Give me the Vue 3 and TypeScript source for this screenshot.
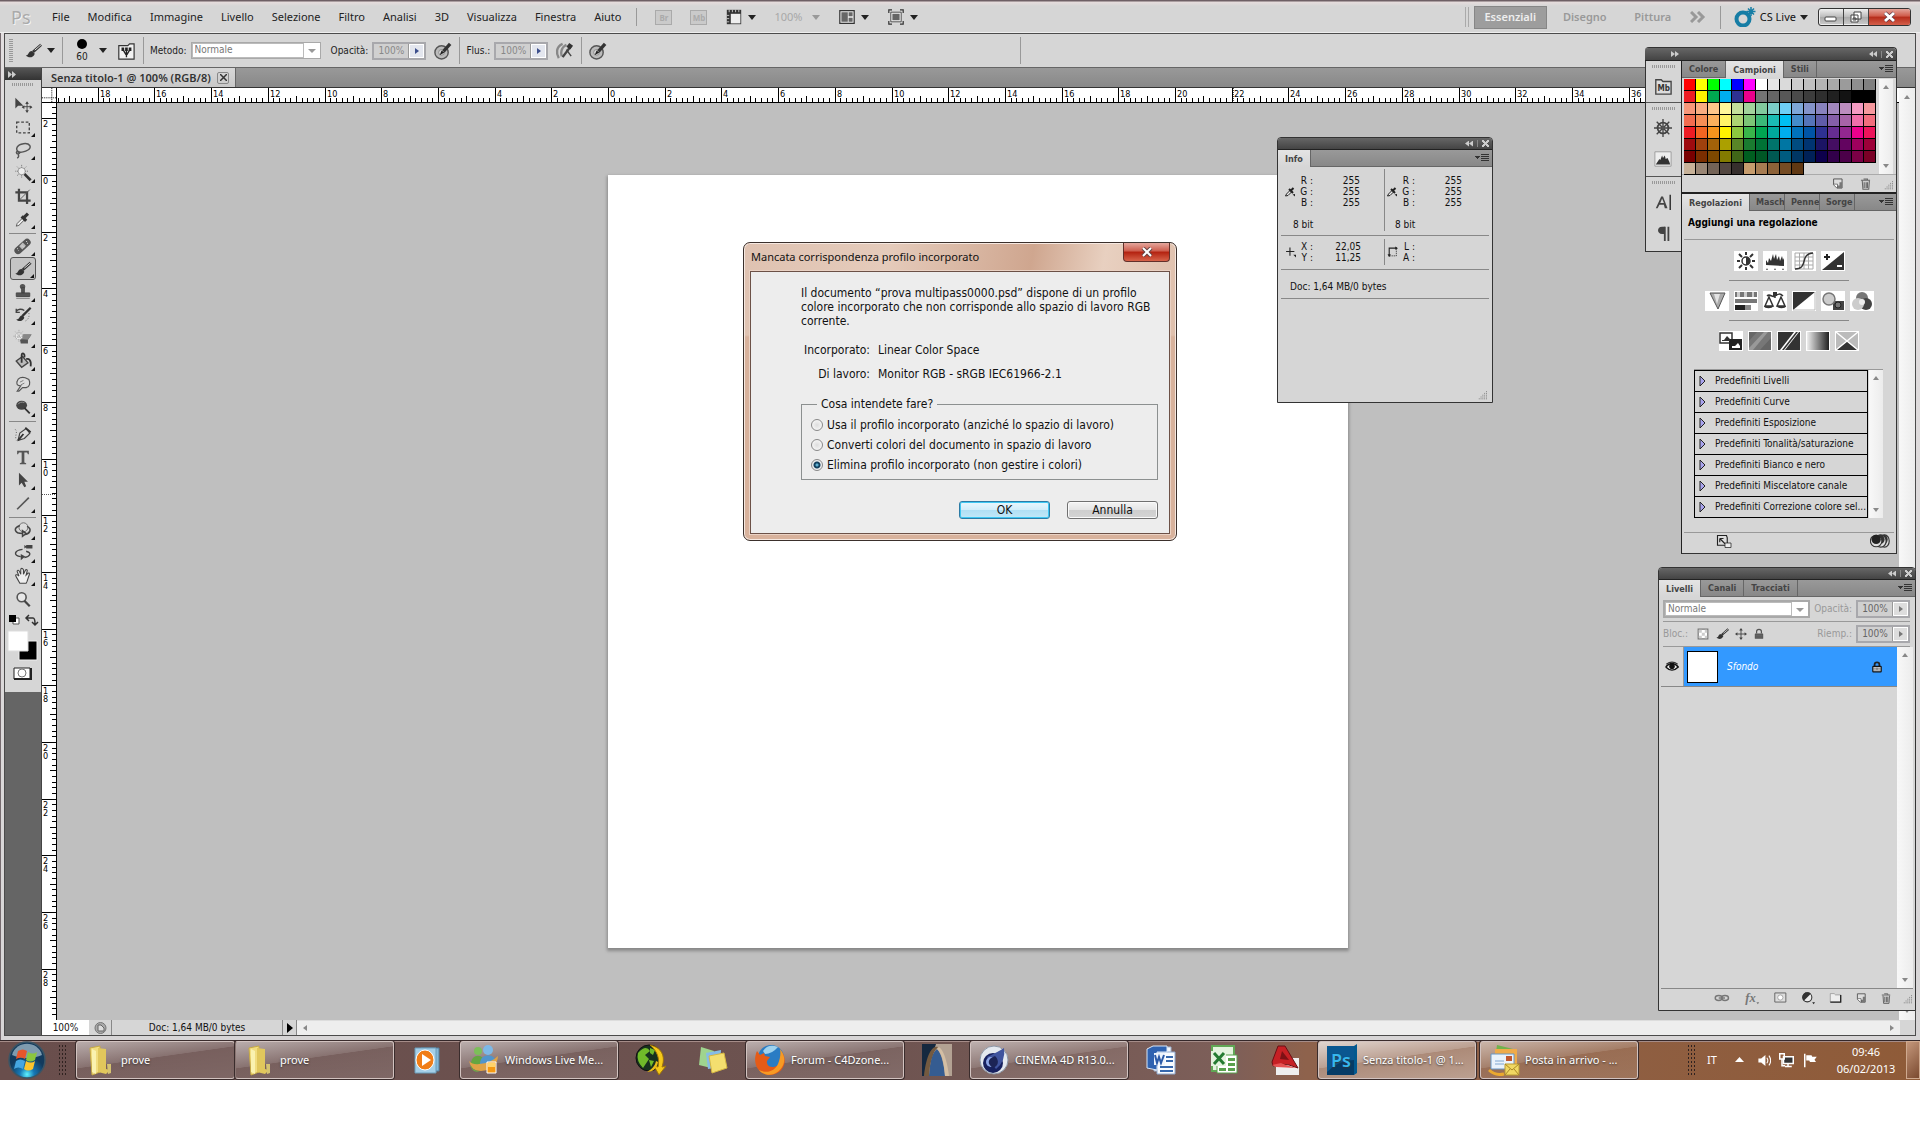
<script setup lang="ts">
import { h, ref } from 'vue'

const art: Record<string, string> = {
  move: '<path d="M2 3v12l3-3 2 0h4z" fill="#444"/><path d="M15 8v11M10 13h10" stroke="#444" stroke-width="1"/><path d="M15 7l2 3h-4zM15 20l2-3h-4zM9 13.500l3-2v4zM21 13.500l-3-2v4z" fill="#444"/>',
  marquee: '<rect x="3.500" y="4.500" width="14" height="12" fill="none" stroke="#444" stroke-width="1.500" stroke-dasharray="3 2"/>',
  lasso: '<path d="M6 13C1 9 4 4 11 3s10 4 5 7c-3 2-8 3-10 2m-2-1c-2 2 0 4 2 3s0-3-2-2m1 3c1 1 1 3-1 4" fill="none" stroke="#555" stroke-width="1.600"/>',
  wand: '<path d="M12 11l7 7" stroke="#333" stroke-width="3"/><circle cx="9" cy="8" r="4" fill="#eee" stroke="#999"/><path d="M9 1v3M9 12v3M2 8h3M13 8h3M4 3l2 2M14 3l-2 2M4 13l2-2" stroke="#666" stroke-dasharray="1 1"/>',
  crop: '<path d="M6 2v13h13M2 6h13v13" fill="none" stroke="#444" stroke-width="2.500"/><path d="M6 15L18 3" stroke="#555"/>',
  eyedrop: '<path d="M3 18l1-3 7-7 2 2-7 7z" fill="#eee" stroke="#555"/><path d="M9 7l5 5M12 8l4-4" stroke="#333" stroke-width="3.500"/>',
  sampler: '<path d="M1 19l2-4 8-8 3 3-8 8z" fill="#eee" stroke="#222" stroke-width="2"/><path d="M8 5l8 8M12 8l5-5" stroke="#222" stroke-width="4"/><path d="M15 16l5 4v-5z" fill="#222"/>',
  heal: '<path d="M5 15L15 6" stroke="#555" stroke-width="8" stroke-linecap="round"/><path d="M8 12l4-4" stroke="#bbb" stroke-width="5"/><path d="M5 15l.5 0M4 13h1M15 7h1M14 5h1M9 10h1M11 11h1" stroke="#eee"/>',
  brush: '<path d="M2 15c4 0 2-5 7-5l3 3c-2 5-7 5-10 2z" fill="#333"/><path d="M10 11l9-8" stroke="#333" stroke-width="3"/><path d="M12 9l7-6" stroke="#eee" stroke-width="1"/>',
  stamp: '<circle cx="10" cy="4" r="3" fill="#555"/><path d="M9 5h3v6H9zM3 11h15v4H3z" fill="#555" stroke="#444"/><path d="M3 17h15" stroke="#777"/>',
  history: '<path d="M3 15c4 0 3-4 7-5l2 3c-2 4-6 5-9 2z" fill="#333"/><path d="M10 11l9-9" stroke="#333" stroke-width="2.500"/><path d="M3 6c2-3 6-3 9-1M3 3v4h4" fill="none" stroke="#444" stroke-width="1.500"/><path d="M17 8c1 4-1 8-5 9" fill="none" stroke="#555" stroke-dasharray="1 2"/>',
  eraser: '<path d="M7 11l4-5h9l-4 6v4H8z" fill="#555"/><path d="M7 11l4-5h9l-4 6z" fill="#888"/><circle cx="6" cy="8" r="4" fill="#eee" stroke="#999" stroke-dasharray="1 1"/><path d="M6 1v14M0 8h12M2 3l8 9M10 3l-8 9" stroke="#999" stroke-dasharray="1 1"/>',
  bucket: '<path d="M3 10l7-5 6 7-7 5z" fill="#bbb" stroke="#444" stroke-width="1.500"/><path d="M9 12V4c0-4 4-3 3 2M14 8c3-1 6 1 5 8" fill="none" stroke="#333" stroke-width="2"/>',
  smudge: '<path d="M4 18l4-6c-4 0-5-2-4-5 1-4 5-5 9-4l4 2c2 4 1 8-3 9l-4 0-4 4z" fill="#ddd" stroke="#555" stroke-width="1.300"/><path d="M7 8l4-2M8 11l4-2" stroke="#777"/>',
  dodge: '<ellipse cx="9" cy="8" rx="6" ry="5" fill="#444"/><path d="M12 11l6 6" stroke="#333" stroke-width="2"/><path d="M5 7c1-2 4-3 7-2" stroke="#999" fill="none"/>',
  pen: '<path d="M5 17l2-8 7-5 4 5-6 6z" fill="#ddd" stroke="#444" stroke-width="1.300"/><path d="M13 3l6 5M5 17l6-7" stroke="#333" stroke-width="2"/><path d="M2 5c3 3-1 7 1 12" fill="none" stroke="#444" stroke-dasharray="1 2"/>',
  type: '<path d="M4 3h13v4h-1l-1-2h-3v11l2 1v1H7v-1l2-1V5H6L5 7H4z" fill="#555"/>',
  select: '<path d="M6 2v14l3-3 3 5 2-1-2-5h4z" fill="#444"/>',
  line: '<path d="M4 17L17 4" stroke="#555" stroke-width="1.800"/>',
  orbit: '<circle cx="11" cy="7" r="5" fill="#ddd" stroke="#666"/><path d="M7 5c-8 3-6 9 3 9M15 6c6 3 3 8-2 9M10 11v6l4-3z" fill="none" stroke="#444" stroke-width="1.700"/>',
  camera: '<path d="M10 6C1 7-1 13 8 14M14 8c7 2 4 6-2 7" fill="none" stroke="#444" stroke-width="1.600"/><path d="M8 11v7l5-4z" fill="#444"/><path d="M14 1h7v4h-7zM12 1l3 2-3 2z" fill="#444"/>',
  hand: '<path d="M7 18l-4-7c-2-3 1-3 3-1L4 5c0-2 2-2 3 1l1 2V3c0-2 2-2 3 0v5l2-4c1-2 3-1 2 1l-1 4 2-2c2-1 2 1 1 3l-2 6-1 2z" fill="#eee" stroke="#444" stroke-width="1.200"/>',
  zoom: '<circle cx="9" cy="8" r="5" fill="#e8e8e8" stroke="#555" stroke-width="1.800"/><path d="M12 12l6 6" stroke="#444" stroke-width="2.500"/>',
  preset: '<path d="M2 4h10l2-2h5v17H2z" fill="#f2f2f2" stroke="#333" stroke-width="1.300"/><path d="M7 9l3 5M14 9l-3 5M10.500 9v8" stroke="#222" stroke-width="1.500" fill="none"/><path d="M5 6h3v4H5zM9 6h3v4H9zM13 6h3v4h-3z" fill="#222"/>',
  tablet: '<circle cx="9" cy="12" r="7" fill="#bbb" stroke="#555" stroke-width="1.500"/><circle cx="9" cy="12" r="3" fill="#ddd" stroke="#888"/><path d="M11 11l7-8" stroke="#333" stroke-width="3.500"/><path d="M7 15l2-5 3 2z" fill="#222"/>',
  airbrush: '<path d="M8 3C1 6 1 13 4 18M12 4C6 7 6 13 7 16" fill="none" stroke="#888" stroke-width="2.500"/><path d="M8 17l9-12" stroke="#444" stroke-width="2.500"/><path d="M12 9l5 7" stroke="#444" stroke-width="1.500"/><path d="M15 2l4 3-3 4-4-3z" fill="#333"/>',
  mb: '<path d="M2 3h6l2 2h9v14H2z" fill="#ddd" stroke="#444" stroke-width="1.500"/><text x="4" y="16" font-size="9" font-weight="bold" fill="#333">Mb</text>',
  wheel: '<circle cx="10" cy="10" r="6" fill="none" stroke="#444" stroke-width="2"/><path d="M10 0v20M0 10h20M3 3l14 14M17 3L3 17" stroke="#444" stroke-width="1.500"/><circle cx="10" cy="10" r="2" fill="#555"/>',
  histo: '<path d="M1 2h18v16H1z" fill="#eee" stroke="#999"/><path d="M2 16l2-3 2-3 1 1 2-5 1 3 2-3 1 4 2-1 2 4 1 3z" fill="#333"/>',
  char: '<path d="M2 17L8 4h2l5 13h-3l-1-4H6l-2 4zM7 11h4L9 6z" fill="#444"/><path d="M18 2v17" stroke="#222" stroke-width="1.500"/>',
  para: '<path d="M16 3v16M12 3v16" stroke="#444" stroke-width="2"/><path d="M17 3H9c-6 0-6 8 0 8h3V3" fill="#444"/>',
  bright: '<rect width="24" height="20" fill="#fff"/><circle cx="12" cy="10" r="4" fill="#fff" stroke="#333" stroke-width="1.500"/><path d="M12 6a4 4 0 0 1 0 8z" fill="#333"/><path d="M12 1v3M12 16v3M3 10h3M18 10h3M5 3l3 3M16 14l3 3M19 3l-3 3M8 14l-3 3" stroke="#333" stroke-width="2"/>',
  levels: '<rect width="24" height="20" fill="#fff"/><path d="M3 14V9l2 3 1-5 2 3 2-7 1 5 2-5 1 6 2-4 1 5 2-5 1 4 1-2v8z" fill="#333"/><path d="M3 19l1-2 1 2zM11 19l1-2 1 2zM19 19l1-2 1 2z" fill="#555"/>',
  curves: '<rect width="24" height="20" fill="#fff"/><path d="M3 2h18v16H3zM7.500 2v16M12 2v16M16.500 2v16M3 6h18M3 10h18M3 14h18" fill="none" stroke="#aaa"/><path d="M3 18c14 0 4-15 18-16" fill="none" stroke="#333" stroke-width="1.500"/>',
  expo: '<rect width="24" height="20" fill="#fff"/><path d="M1 19L23 1v18z" fill="#333"/><path d="M6 3v6M3 6h6" stroke="#222" stroke-width="2"/><path d="M16 15h5" stroke="#fff" stroke-width="2"/>',
  vibrance: '<rect width="24" height="20" fill="#fff"/><path d="M5 2h15l-7 16z" fill="#aaa" stroke="#555"/><path d="M9 3h6l-3 10z" fill="#e4e4e4"/>',
  hue: '<rect width="24" height="20" fill="#fff"/><path d="M1 1h22v5H1z" fill="#777"/><path d="M3 1h3v5H3zM10 1h3v5h-3zM18 1h2v5h-2z" fill="#ccc"/><path d="M1 8h22v4H1z" fill="#777"/><path d="M1 14h10v5H1z" fill="#222"/><path d="M11 14h6v5h-6z" fill="#888"/>',
  balance: '<rect width="24" height="20" fill="#fff"/><path d="M12 2v5M4 5c3-3 5 2 8 0s5-3 8 0M6 6L2 15h8zM18 6l-4 9h8z" fill="none" stroke="#333" stroke-width="1.500"/><path d="M1 15h9c0 3-9 3-9 0zM14 15h9c0 3-9 3-9 0zM10 1h4v4h-4z" fill="#333"/>',
  bw: '<rect width="24" height="20" fill="#fff"/><path d="M1 1h22L1 19z" fill="#333"/><path d="M1 19h22V1" fill="none" stroke="#bbb"/>',
  photo: '<rect width="24" height="20" fill="#fff"/><path d="M12 10h11v9H12z" fill="#444"/><circle cx="8" cy="8" r="6" fill="#ccc" stroke="#777" stroke-width="1.500"/><circle cx="17" cy="14" r="3" fill="#777" stroke="#222"/>',
  mixer: '<rect width="24" height="20" fill="#fff"/><circle cx="12" cy="7" r="6" fill="#777"/><circle cx="16" cy="13" r="6" fill="#444"/><circle cx="8" cy="13" r="6" fill="#ccc"/><circle cx="12" cy="11" r="3" fill="#eee"/>',
  invert: '<rect width="24" height="20" fill="#fff"/><path d="M1 2h12v10H1z" fill="#fff" stroke="#333" stroke-width="1.500"/><path d="M10 8h13v11H10z" fill="#222"/><path d="M3 9h2l3-4 3 3v2H3z" fill="#333"/><path d="M13 15h3l3-3 2 3v2h-8z" fill="#fff"/>',
  poster: '<rect width="24" height="20" fill="#fff"/><path d="M1 1h22v18H1z" fill="#777"/><path d="M1 17L16 1h4L5 19H1z" fill="#999"/><path d="M1 10L9 1H1zM12 19L23 7v12z" fill="#666"/>',
  thresh: '<rect width="24" height="20" fill="#fff"/><path d="M1 1h22v18H1z" fill="#333"/><path d="M3 19L17 1h5L8 19z" fill="#fff"/><path d="M5 19L19 1h2L7 19z" fill="#333"/>',
  gradmap: '<defs><linearGradient id="gm"><stop stop-color="#eee"/><stop offset="1" stop-color="#222"/></linearGradient></defs><rect width="24" height="20" fill="#fff"/><path d="M1 1h22v18H1z" fill="url(#gm)"/>',
  selcolor: '<rect width="24" height="20" fill="#fff"/><path d="M1 1h22v18H1z" fill="#bbb"/><path d="M1 19h22L12 10z" fill="#333"/><path d="M1 1l22 18M23 1L1 19" stroke="#fff" stroke-width="1.500"/>',
  newpage: '<path d="M4 3h13v14H9l-5-5z" fill="#ddd" stroke="#555" stroke-width="1.500"/><path d="M9 17h8V8h-4v5H9z" fill="#777"/><path d="M4 11h6v6" fill="#fff" stroke="#444"/>',
  trash: '<path d="M3 5h14M7 3h6v2M5 6l1 13h9l1-13M8 8v9M11 8v9M13 8v9" fill="#ccc" stroke="#666" stroke-width="1.600"/>',
  corner: '<path d="M3 18h15M6 15h12M9 12h9M12 9h6M15 6h3M18 3v0" stroke="#777" stroke-width="1.500" stroke-dasharray="1.500 1.500"/>',
  link: '<ellipse cx="6" cy="10" rx="5" ry="3.500" fill="none" stroke="#777" stroke-width="2"/><ellipse cx="15" cy="10" rx="5" ry="3.500" fill="none" stroke="#777" stroke-width="2"/><path d="M6 10h9" stroke="#777" stroke-width="2"/>',
  fx: '<text x="1" y="15" font-size="18" font-style="italic" font-family="Liberation Serif, serif" font-weight="bold" fill="#777">fx</text><path d="M17 16h4l-2 3z" fill="#777"/>',
  mask: '<path d="M2 3h17v14H2z" fill="#ddd" stroke="#666" stroke-width="1.500"/><circle cx="10.500" cy="10" r="4" fill="#fff" stroke="#888"/>',
  adjust: '<circle cx="9" cy="9" r="6.500" fill="#eee" stroke="#333" stroke-width="1.500"/><path d="M4 14a7 7 0 0 1 10-10z" fill="#333"/><path d="M16 16h4l-2 3z" fill="#222"/>',
  folder: '<path d="M2 4h6l2 2h8v11H2z" fill="#eee" stroke="#888"/><path d="M2 17h16V6" fill="none" stroke="#222" stroke-width="2"/>',
  eye: '<path d="M1 10q9-10 18 0-9 9-18 0" fill="#eee" stroke="#111" stroke-width="2"/><circle cx="10" cy="9" r="4" fill="#111"/><path d="M2 6q8-6 16 0" fill="none" stroke="#333" stroke-width="2"/>',
  lock: '<path d="M6 9V6c0-5 8-5 8 0v3" fill="none" stroke="#222" stroke-width="3"/><rect x="3" y="9" width="14" height="9" rx="1" fill="#ddd" stroke="#111" stroke-width="2"/><path d="M4 12h12M4 15h12M10 11v4" stroke="#444"/>',
  darklock: '<path d="M6 9V6c0-5 8-5 8 0v3" fill="none" stroke="#555" stroke-width="2"/><rect x="3" y="9" width="14" height="9" rx="1" fill="#555"/><path d="M4 12h12M4 15h12" stroke="#777"/>',
  checker: '<path d="M2 2h16v16H2z" fill="#fff" stroke="#777" stroke-width="2"/><path d="M3 3h5v5H3zM13 3h4v5h-4zM8 8h5v5H8zM3 13h5v4H3zM13 13h4v4h-4z" fill="#ccc"/>',
  cross: '<path d="M10 2v16M2 10h16" stroke="#444" stroke-width="1.500"/><path d="M10 0l3 4H7zM10 20l3-4H7zM0 10l4-3v6zM20 10l-4-3v6z" fill="#444"/>',
  plus: '<path d="M9 2v15M2 9h15" stroke="#222" stroke-width="2"/><path d="M15 15l5 5v-5z" fill="#222"/>',
  area: '<path d="M4 18V3h14" fill="none" stroke="#222" stroke-width="2"/><path d="M17 5v12H5" fill="none" stroke="#222" stroke-width="1.500" stroke-dasharray="2 1.500"/><path d="M1 14h6l-3 5zM15 0v6l5-3z" fill="#222"/>',
  expand: '<path d="M2 2h12l1 3v10H2z" fill="#ddd" stroke="#222" stroke-width="1.500"/><path d="M5 6v5M5 6h5M5 6l7 7" stroke="#222" stroke-width="1.500"/><path d="M12 12h8v6h-8z" fill="#eee" stroke="#222"/>',
  clip: '<ellipse cx="19" cy="9" rx="6" ry="8" fill="#ddd" stroke="#333" stroke-width="1.500"/><ellipse cx="18" cy="7" rx="5" ry="6" fill="#333"/><ellipse cx="14" cy="9" rx="7" ry="8" fill="#ddd" stroke="#333" stroke-width="1.500"/><ellipse cx="13" cy="7" rx="6" ry="6" fill="#333"/><circle cx="8" cy="9" r="7.500" fill="#ddd" stroke="#333" stroke-width="1.500"/><circle cx="8" cy="7" r="6" fill="#222"/>',
  ruler: '<path d="M1 1h18v18H1z" fill="#333"/><path d="M6 6h12v12H6z" fill="#eee"/><path d="M4 1v3M8 1v3M12 1v3M16 1v3M1 8h3M1 12h3M1 16h3" stroke="#ddd"/>',
  arrange: '<path d="M1 2h18v16H1z" fill="#eee" stroke="#333" stroke-width="1.500"/><path d="M3 4h8v12H3zM12 4h5v5h-5zM12 11h5v5h-5z" fill="#666"/>',
  screen: '<path d="M1 5V1h4M15 1h4v4M19 15v4h-4M5 19H1v-4" fill="none" stroke="#333" stroke-width="1.500"/><path d="M3.500 4h13v12h-13z" fill="#eee" stroke="#333"/><path d="M5.500 6h9v8h-9z" fill="#666"/>',
  orb: '<defs><radialGradient id="o" cx=".5" cy=".9"><stop stop-color="#5ff4ff"/><stop offset=".4" stop-color="#1678b5"/><stop offset="1" stop-color="#123a5d"/></radialGradient></defs><circle cx="20" cy="20" r="18" fill="url(#o)" stroke="#3b5565" stroke-width="1.500"/><path d="M5 15c4-15 26-15 30 0-8 4-22 4-30 0z" fill="#b9cfdb" opacity=".65"/><path d="M11 11q5-3 9 0l-2 8q-4-3-9 0z" fill="#e7552b"/><path d="M21 12q5 3 9 0l-2 8q-5 3-9 0z" fill="#8bc63e"/><path d="M9 21q4-3 9 0l-2 8q-5-3-9 0z" fill="#45a6e1"/><path d="M19 21q5 3 9 0l-2 8q-5 3-9 0z" fill="#fcc52c"/>',
  files: '<path d="M6 4l10-2v26L8 31z" fill="#f1dd80" stroke="#c7aa45"/><path d="M14 4l8 1v20l4 1-4 4-8-2z" fill="#e1c75c"/><path d="M8 5l4 2v23l-4-2z" fill="#faf2b0"/><path d="M23 20h4v9l-3 1z" fill="#d5c370"/>',
  player: '<path d="M10 4h18v23H10z" fill="#85b7d7" stroke="#527e9b"/><path d="M4 4h21v25H4z" fill="#a4cfe8" stroke="#6b9dba"/><ellipse cx="14" cy="16" rx="9" ry="10" fill="#f07d17" stroke="#fff"/><path d="M11 10l9 6-9 6z" fill="#fff"/>',
  people: '<circle cx="10" cy="7" r="4" fill="#7cbf59"/><path d="M3 20c0-11 14-11 14 0v4H3z" fill="#64a641"/><circle cx="20" cy="6" r="5" fill="#7eb9e7"/><path d="M12 20c0-12 17-11 16 0l-3 5H13z" fill="#5095cd"/><path d="M1 17q4 4 10 3 12-1 19-8-1 14-17 15Q3 27 1 17z" fill="#dfa346"/><path d="M2 21q3 6 10 6-7 3-10-6z" fill="#6dad46"/><path d="M19 18h9v11h-9z" fill="#f49913" stroke="#fff"/><path d="M20 19h7v4h-7z" fill="#ffd36a"/>',
  idm: '<circle cx="14" cy="14" r="13" fill="#17321e" stroke="#111"/><path d="M3 9q8-9 12-2l-5 4 4 4-6 9Q1 17 3 9zM15 4l5 2-2 5-3-2zM14 16l5 1-3 6z" fill="#70ba2a"/><path d="M15 1c14 3 15 14 12 22l4-1-7 9-5-9 4 1c2-9-1-16-8-22z" fill="#f5c91a" stroke="#9f7409"/><path d="M23 18c-1 7-6 10-11 10 5-3 8-6 9-11z" fill="#e9bb1a"/>',
  notes: '<path d="M4 3l13 4-3 17-12-3z" fill="#9fd48e"/><path d="M9 9l15-3-1 17-12 2z" fill="#86bce6"/><path d="M12 12l15-3 3 15-15 5z" fill="#f4df6f" stroke="#d5b743"/>',
  firefox: '<circle cx="17" cy="14" r="13" fill="#2a7cc4"/><path d="M9 7Q14-1 24 3q-6 7-13 7z" fill="#9fd2ee"/><path d="M28 8c6 9 2 21-11 23C3 31-2 18 3 7l3 4 4-2 1 3 5 1-3 4c-1 6 6 8 11 4 4-3 5-8 4-13" fill="#e55b17"/><path d="M26 5c8 9 4 21-6 25-6 2-12 0-15-4 8 4 16 1 19-6 2-5 3-10 2-15" fill="#f79a24"/>',
  arch: '<path d="M1 0h30v32H1z" fill="#b3a293"/><path d="M1 0h14L5 32H1z" fill="#15283f"/><path d="M8 32C9 17 11 9 16 5c5 5 7 17 8 27z" fill="#355c91"/><path d="M3 32C5 14 10 1 17 3c-6 6-8 15-9 29z" fill="#745a40"/><path d="M18 3c6 4 9 20 10 29h-4C23 17 20 8 16 5z" fill="#d3bea4"/>',
  c4d: '<circle cx="16" cy="16" r="14" fill="#e4e9ef" stroke="#8c96a5"/><circle cx="15" cy="19" r="10" fill="#17215f"/><path d="M9 13Q20 8 26 4 28 17 18 25z" fill="#40549e"/><circle cx="13" cy="18" r="5" fill="#8ca5e6"/><path d="M17 12c-8 3-8 8-2 12 5-2 7-7 2-12" fill="#1c2456"/>',
  word: '<path d="M9 3h17v24H9z" fill="#f4f8fc" stroke="#9fb2ce"/><path d="M12 8h18v22H12z" fill="#f8fbff" stroke="#8fa9cf"/><path d="M21 13h7M21 17h7M15 23h13M15 27h13" stroke="#3567ad" stroke-width="2"/><path d="M2 5l6-3h14v6H12v18L2 24z" fill="#2f62b0" stroke="#d9e6f6"/><path d="M9 9h11v12H9z" fill="#eef4fc"/><path d="M10 11l2 8 2-6 2 6 3-8" fill="none" stroke="#2b5aa8" stroke-width="2"/>',
  excel: '<path d="M5 2h22v25H5z" fill="#e4f3de" stroke="#61a755" stroke-width="2"/><path d="M10 11h20v18H10z" fill="#fff" stroke="#59a14d"/><path d="M21 14h7v3h-7zM21 19h7v3h-7zM12 24h7v3h-7zM21 24h7v3h-7z" fill="#59a14d"/><path d="M4 7h15v15H4z" fill="#e4f3de"/><path d="M7 9l10 11M17 9L7 20" stroke="#247b31" stroke-width="3"/>',
  acad: '<path d="M7 14h23v17H7z" fill="#eee"/><path d="M3 18L9 2h7l13 22-9-3-8-1-8 2z" fill="#c62024" stroke="#671014"/><path d="M11 15l2-8 7 9z" fill="#7d1115"/><path d="M3 21l9-2 5 2 10 3-20-1z" fill="#e65252"/>',
  mail: '<path d="M9 1l20 5-3 14L7 16z" fill="#71b34c"/><path d="M7 5h22v16H7z" fill="#efab4a"/><path d="M3 10h23v15H3z" fill="#eaf2fb" stroke="#6997c4"/><path d="M18 12h6v5h-6z" fill="#c0572f"/><path d="M7 17h9M7 20h9" stroke="#7fa6d0"/><path d="M17 20h14v11H17z" fill="#f1d862" stroke="#b99a34"/><path d="M17 20l7 6 7-6M17 31l5-6M31 31l-5-6" fill="none" stroke="#aa8725"/><path d="M1 26q6 6 15 4" fill="none" stroke="#eaa92f" stroke-width="3"/>',
  ps: '<path d="M1 2h27l3-2v29l-3 2z" fill="#02598f"/><path d="M1 2h27v29H1z" fill="#063b66"/><path d="M1 2h27v14q-15 0-27 12z" fill="#0a5790"/><text x="5" y="23" font-size="18" font-weight="600" fill="#35b7ef">Ps</text>',
  sound: '<path d="M2 7h4l6-5v16l-6-5H2z" fill="#fff"/><path d="M14 6q3 4 0 8M17 3q5 7 0 14" fill="none" stroke="#fff" stroke-width="1.500"/>',
  network: '<path d="M6 5h13v9H6z" fill="#333" stroke="#fff" stroke-width="2"/><path d="M12 14v4M8 18h9M1 1h6v7H1zM4 8v9h4" fill="none" stroke="#fff" stroke-width="2"/>',
  flag: '<path d="M3 1v18" stroke="#fff" stroke-width="2"/><path d="M5 3h7l1 2h6l-3 4 2 3h-8l-1-2H5z" fill="#fff"/>',
  cs: '<circle cx="9" cy="12" r="6.500" fill="none" stroke="#167da5" stroke-width="4"/><path d="M17 0v9M12.500 4.500h9M14 1.500l6 6M20 1.500l-6 6" stroke="#167da5" stroke-width="1.500"/>',
}

// Small inline-SVG helper shared by every glyph on the page
const Icon = (p: { name: string; w: number; h?: number; box?: string }) =>
  h('svg', {
    width: p.w,
    height: p.h ?? p.w,
    viewBox: p.box ?? '0 0 20 20',
    'aria-hidden': 'true',
    style: { display: 'block', flex: 'none' },
    innerHTML: art[p.name],
  })
Icon.props = ['name', 'w', 'h', 'box']

const menus = ['File', 'Modifica', 'Immagine', 'Livello', 'Selezione', 'Filtro', 'Analisi', '3D', 'Visualizza', 'Finestra', 'Aiuto']
const toolGroups = [
  ['move', 'marquee', 'lasso', 'wand', 'crop', 'eyedrop'],
  ['heal', 'brush', 'stamp', 'history', 'eraser', 'bucket', 'smudge', 'dodge'],
  ['pen', 'type', 'select', 'line'],
  ['orbit', 'camera', 'hand', 'zoom'],
]
const dockGroups = [['mb'], ['wheel', 'histo'], ['char', 'para']]
const adjustments = [
  ['bright', 'levels', 'curves', 'expo'],
  ['vibrance', 'hue', 'balance', 'bw', 'photo', 'mixer'],
  ['invert', 'poster', 'thresh', 'gradmap', 'selcolor'],
]
const presets = ['Livelli', 'Curve', 'Esposizione', 'Tonalità/saturazione', 'Bianco e nero', 'Miscelatore canale', 'Correzione colore sel...']

const swatches = `
ff0000 ffff00 00ff00 00ffff 0000ff ff00ff ffffff e6e6e6 dadada cccccc c0c0c0 b4b4b4 a8a8a8 9b9b9b 8e8e8e 808080
ed1c24 fff200 00a651 00aeef 2e3192 ec008c 737373 656565 575757 4a4a4a 3c3c3c 2e2e2e 202020 131313 000000 000000
f7977a f9ad81 fdc68a fff79a c4df9b a2d39c 82ca9d 7bcdc8 6ecff6 7ea7d8 8493ca 8882be a187be bc8dbf f49ac2 f6989d
f26c4f f68e55 fbaf5c fff467 acd372 7cc576 3bb878 1abbb4 00bff3 438cca 5574b9 605ca8 855fa8 a763a8 f06ea9 f26d7d
ed1c24 f26522 f7941d fff200 8dc73f 39b54a 00a651 00a99d 00aeef 0072bc 0054a6 2e3192 662d91 92278f ec008c ed145b
9e0b0f a0410d a36209 aba000 598527 1a7b30 007236 00746b 0076a3 004b80 003471 1b1464 440e62 630460 9e005d 9e0039
790000 7b2e00 7d4900 827b00 406618 005e20 005826 005952 005b7f 003663 002157 0d004c 32004b 4b0049 7b0046 7a0026
c7b299 998675 736357 534741 362f2d c69c6d a67c52 8c6239 754c24 603813`.trim().split(/\s+/)

// Rulers: one centimetre is 28.35 px and carries five divisions
const DIVISION = 28.35 / 5
const ticks = (from: number, to: number) =>
  Array.from({ length: to - from + 1 }, (_, i) => {
    const n = from + i
    return { at: Math.round(n * DIVISION), len: n % 10 === 0 ? 15 : n % 5 === 0 ? 6 : 4, label: n % 10 === 0 ? String(Math.abs(n / 5)) : '' }
  })
const hTicks = ticks(-97, 227)
const vTicks = ticks(-12, 149)

const choice = ref(2)
const choices = [
  'Usa il profilo incorporato (anziché lo spazio di lavoro)',
  'Converti colori del documento in spazio di lavoro',
  'Elimina profilo incorporato (non gestire i colori)',
]

type Task = { icon: string; label?: string; kind: string }
const tasks: Task[] = [
  { icon: 'player', kind: 'pin' },
  { icon: 'people', label: 'Windows Live Me...', kind: 'win' },
  { icon: 'idm', kind: 'pin' },
  { icon: 'notes', kind: 'pin' },
  { icon: 'firefox', label: 'Forum - C4Dzone...', kind: 'win' },
  { icon: 'arch', kind: 'pin' },
  { icon: 'c4d', label: 'CINEMA 4D R13.0...', kind: 'win' },
  { icon: 'word', kind: 'pin' },
  { icon: 'excel', kind: 'pin' },
  { icon: 'acad', kind: 'pin' },
  { icon: 'ps', label: 'Senza titolo-1 @ 1...', kind: 'win active' },
  { icon: 'mail', label: 'Posta in arrivo - ...', kind: 'win' },
]
</script>

<template>
  <div class="screen">
    <header class="menubar">
      <span class="logo">Ps</span>
      <nav class="menus"><a v-for="m in menus" :key="m" href="#">{{ m }}</a></nav>
      <div class="appbar">
        <span class="chip">Br</span>
        <span class="chip">Mb</span>
        <button class="drop" aria-label="Extra"><Icon name="ruler" :w="18" :h="16" /><i class="tri"></i></button>
        <button class="drop zoomdrop">100%<i class="tri"></i></button>
        <button class="drop" aria-label="Disponi"><Icon name="arrange" :w="18" :h="16" /><i class="tri"></i></button>
        <button class="drop" aria-label="Schermo"><Icon name="screen" :w="18" :h="16" /><i class="tri"></i></button>
      </div>
      <div class="workspaces">
        <i class="bars"></i>
        <button class="ws on">Essenziali</button>
        <button class="ws">Disegno</button>
        <button class="ws">Pittura</button>
        <svg class="more" width="16" height="12" viewBox="0 0 16 12"><path d="M1 1l5 5-5 5M8 1l5 5-5 5" fill="none" stroke="#999" stroke-width="3" /></svg>
      </div>
      <button class="cslive"><Icon name="cs" :w="22" :h="20" box="0 0 22 20" />CS Live<i class="tri"></i></button>
      <div class="winbtns">
        <button aria-label="Riduci"><svg width="14" height="12" viewBox="0 0 14 12"><rect x="1" y="6" width="11" height="4" rx="1" fill="#fff" stroke="#444" /></svg></button>
        <button aria-label="Ripristina"><svg width="14" height="12" viewBox="0 0 14 12"><path d="M5 1h7v7H5zM2 4h7v7H2z" fill="#fff" stroke="#444" /><path d="M4 7h3v2H4z" fill="none" stroke="#444" /></svg></button>
        <button class="close" aria-label="Chiudi"><svg width="14" height="12" viewBox="0 0 14 12"><path d="M2 2l9 8M11 2L2 10" stroke="#534" stroke-width="4" /><path d="M2 2l9 8M11 2L2 10" stroke="#fff" stroke-width="3" /></svg></button>
      </div>
    </header>

    <div class="frame">
      <div class="inner">
        <section class="options">
          <i class="vgrip"></i>
          <Icon name="brush" :w="20" :h="18" /><i class="tri"></i>
          <i class="vsep"></i>
          <div class="tip"><i></i><span>60</span></div><i class="tri"></i>
          <Icon name="preset" :w="20" :h="18" />
          <i class="vsep"></i>
          <label for="mode">Metodo:</label>
          <div class="combo wide"><select id="mode"><option>Normale</option></select></div>
          <label for="opacity">Opacità:</label>
          <div class="spin"><input id="opacity" value="100%"><button aria-label="Opacità"></button></div>
          <Icon name="tablet" :w="19" :h="19" />
          <i class="vsep"></i>
          <label for="flow">Flus.:</label>
          <div class="spin"><input id="flow" value="100%"><button aria-label="Flusso"></button></div>
          <Icon name="airbrush" :w="19" :h="19" />
          <i class="vsep"></i>
          <Icon name="tablet" :w="19" :h="19" />
          <i class="vsep far"></i>
        </section>

        <div class="work">
          <aside class="tools">
            <div class="toolhead"><svg width="8" height="7" viewBox="0 0 8 7"><path d="M0 0l4 3.500L0 7zM4 0l4 3.500L4 7z" fill="#ccc" /></svg></div>
            <i class="grip"></i>
            <div v-for="(g, gi) in toolGroups" :key="gi" class="toolgroup">
              <button v-for="t in g" :key="t" class="tool" :class="{ sel: t === 'brush' }" :aria-label="t">
                <Icon :name="t" :w="20" :h="18" box="0 0 21 20" />
                <i v-if="t !== 'move' && t !== 'zoom'" class="fly"></i>
              </button>
            </div>
            <svg class="colors" width="36" height="82" viewBox="0 0 36 82">
              <path d="M8 8h6v6H8z" fill="#fff" stroke="#555" /><path d="M4 5h7v7H4z" fill="#000" />
              <path d="M22 8h6q2 0 2 6M24 5l-3 3 3 3M27 12l3 3 3-3" fill="none" stroke="#333" stroke-width="1.500" />
              <path d="M14 31h18v19H14z" fill="#000" stroke="#eee" /><path d="M3 21h20v20H3z" fill="#fff" stroke="#ddd" />
              <path d="M9 58h16v11H9z" fill="#fff" stroke="#222" /><path d="M9 69h17V58" fill="none" stroke="#222" stroke-width="2" /><circle cx="17" cy="63" r="4" fill="#fff" stroke="#777" />
            </svg>
          </aside>

          <main class="doc">
            <div class="doctabs">
              <div class="doctab">Senza titolo-1 @ 100% (RGB/8)
                <button aria-label="Chiudi documento"><svg width="7" height="7" viewBox="0 0 7 7"><path d="M0 0l7 7M7 0L0 7" stroke="#333" stroke-width="1.500" /></svg></button>
              </div>
            </div>
            <div class="grid">
              <svg class="origin" width="15" height="15" viewBox="0 0 15 15"><path d="M0 10.500h15M10.500 0v15" stroke="#000" stroke-dasharray="1 1" /></svg>
              <div class="hruler">
                <svg width="100%" height="14">
                  <svg x="50%" overflow="visible">
                    <g transform="translate(-370 0)" shape-rendering="crispEdges">
                      <template v-for="t in hTicks" :key="t.at">
                        <rect :x="t.at" :y="14 - t.len" width="1" :height="t.len" />
                        <text v-if="t.label" :x="t.at + 2" y="9">{{ t.label }}</text>
                      </template>
                      <path d="M625 0v14" stroke="#555" stroke-dasharray="1 1" />
                    </g>
                  </svg>
                </svg>
              </div>
              <div class="vscroll"><i class="up"></i><i class="down"></i></div>
              <div class="vruler">
                <svg width="14" height="100%">
                  <g transform="translate(0 72)" shape-rendering="crispEdges">
                    <template v-for="t in vTicks" :key="t.at">
                      <rect :x="14 - t.len" :y="t.at" :width="t.len" height="1" />
                      <text v-for="(c, i) in t.label" :key="i" x="1" :y="t.at + 9 + i * 8">{{ c }}</text>
                    </template>
                    <path d="M0 319h14" stroke="#555" stroke-dasharray="1 1" />
                  </g>
                </svg>
              </div>
              <div class="canvas"><div class="paper"></div></div>
              <div class="status">
                <input aria-label="Zoom" value="100%">
                <button class="vc" aria-label="Versioni"><svg width="13" height="12" viewBox="0 0 13 12"><circle cx="6.500" cy="6" r="5.500" fill="#aaa" stroke="#777" /><path d="M4 3h3l3 3v3H4z" fill="#ddd" stroke="#666" /></svg></button>
                <span class="docinfo">Doc: 1,64 MB/0 bytes</span>
                <button class="go" aria-label="Informazioni"><i></i></button>
                <div class="hscroll"><i class="left"></i><i class="right"></i></div>
                <i class="sizer"></i>
              </div>
            </div>
          </main>
        </div>
      </div>
    </div>

    <section class="panel info">
      <div class="phead"><i class="back"></i><i class="pbar"></i><i class="x"></i></div>
      <div class="ptabs"><button class="on">Info</button><i class="pmenu"></i></div>
      <div class="pbody">
        <div class="readouts">
          <div v-for="n in 2" :key="n" class="rgb">
            <Icon name="sampler" :w="10" :h="11" />
            <table><tbody><tr v-for="c in ['R', 'G', 'B']" :key="c"><th>{{ c }} :</th><td>255</td></tr></tbody></table>
            <span class="bit">8 bit</span>
          </div>
        </div>
        <div class="readouts low">
          <div class="rgb"><Icon name="plus" :w="11" :h="12" /><table><tbody><tr><th>X :</th><td>22,05</td></tr><tr><th>Y :</th><td>11,25</td></tr></tbody></table></div>
          <div class="rgb"><Icon name="area" :w="11" :h="12" /><table><tbody><tr><th>L :</th><td></td></tr><tr><th>A :</th><td></td></tr></tbody></table></div>
        </div>
        <p class="docsize">Doc: 1,64 MB/0 bytes</p>
        <div class="resize"><Icon name="corner" :w="12" /></div>
      </div>
    </section>

    <section class="panel dock">
      <div class="phead"><i class="back fwd"></i><i class="back"></i><i class="pbar"></i><i class="x"></i></div>
      <div class="dockrow">
        <div class="strip">
          <div v-for="(g, i) in dockGroups" :key="i" class="stripgroup">
            <i class="grip"></i>
            <button v-for="t in g" :key="t" :aria-label="t"><Icon :name="t" :w="18" :h="18" /></button>
          </div>
        </div>
        <div class="stack">
          <div class="ptabs"><button>Colore</button><button class="on">Campioni</button><button>Stili</button><i class="pmenu"></i></div>
          <div class="swatchbox">
            <div class="swatches"><i v-for="(c, i) in swatches" :key="i" :style="{ background: '#' + c }"></i></div>
            <div class="pscroll"><i class="up"></i><i class="down"></i></div>
          </div>
          <div class="pfoot"><Icon name="newpage" :w="13" /><Icon name="trash" :w="13" /><Icon name="corner" :w="12" /></div>
          <div class="ptabs second"><button class="on">Regolazioni</button><button class="cut">Masch</button><button class="cut">Penne</button><button class="cut">Sorge</button><i class="pmenu"></i></div>
          <h2>Aggiungi una regolazione</h2>
          <div class="adjust">
            <div v-for="(r, i) in adjustments" :key="i" class="adjrow">
              <button v-for="a in r" :key="a" :aria-label="a"><Icon :name="a" :w="24" :h="20" box="0 0 24 20" /></button>
            </div>
          </div>
          <div class="presetbox">
            <ul><li v-for="p in presets" :key="p"><svg width="7" height="12" viewBox="0 0 7 12"><path d="M1 1l5 5-5 5z" fill="#a9a4ee" stroke="#222" /></svg>Predefiniti {{ p }}</li></ul>
            <div class="pscroll"><i class="up"></i><i class="down"></i></div>
          </div>
          <div class="adjfoot"><Icon name="expand" :w="17" :h="15" /><Icon name="clip" :w="20" :h="14" box="0 0 26 18" /></div>
        </div>
      </div>
    </section>

    <section class="panel layers">
      <div class="phead"><i class="back"></i><i class="pbar"></i><i class="x"></i></div>
      <div class="ptabs"><button class="on">Livelli</button><button>Canali</button><button>Tracciati</button><i class="pmenu"></i></div>
      <div class="lrow">
        <div class="combo"><select aria-label="Metodo di fusione"><option>Normale</option></select></div>
        <label for="lop">Opacità:</label>
        <div class="spin flat"><input id="lop" value="100%"><button aria-label="Opacità livello"></button></div>
      </div>
      <div class="lrow">
        <span class="lockl">Bloc.:</span>
        <Icon name="checker" :w="12" /><Icon name="brush" :w="14" /><Icon name="cross" :w="12" /><Icon name="darklock" :w="12" />
        <label for="lfill" class="push">Riemp.:</label>
        <div class="spin flat"><input id="lfill" value="100%"><button aria-label="Riempimento"></button></div>
      </div>
      <div class="lbody">
        <div class="llist">
          <div class="layer">
            <button class="vis" aria-label="Visibilità"><Icon name="eye" :w="14" :h="14" /></button>
            <div class="lmain"><span class="thumb"></span><em>Sfondo</em><Icon name="lock" :w="12" /></div>
          </div>
        </div>
        <div class="pscroll"><i class="up"></i><i class="down"></i></div>
      </div>
      <div class="lfoot">
        <Icon name="link" :w="17" :h="14" /><Icon name="fx" :w="17" :h="14" /><Icon name="mask" :w="14" :h="13" /><Icon name="adjust" :w="16" :h="14" /><Icon name="folder" :w="13" /><Icon name="newpage" :w="12" /><Icon name="trash" :w="12" /><Icon name="corner" :w="12" />
      </div>
    </section>

    <div class="modal">
      <form class="dialog" @submit.prevent>
        <div class="dtitle"><span>Mancata corrispondenza profilo incorporato</span>
          <button type="button" class="dclose" aria-label="Chiudi"><svg width="12" height="10" viewBox="0 0 12 10"><path d="M2 1l8 8M10 1L2 9" stroke="#644" stroke-width="4" /><path d="M2 1l8 8M10 1L2 9" stroke="#fff" stroke-width="2" /></svg></button>
        </div>
        <div class="dbody">
          <p>Il documento “prova multipass0000.psd” dispone di un profilo<br>colore incorporato che non corrisponde allo spazio di lavoro RGB<br>corrente.</p>
          <dl><dt>Incorporato:</dt><dd>Linear Color Space</dd><dt>Di lavoro:</dt><dd>Monitor RGB - sRGB IEC61966-2.1</dd></dl>
          <fieldset>
            <legend>Cosa intendete fare?</legend>
            <label v-for="(c, i) in choices" :key="i"><input v-model="choice" type="radio" name="profile" :value="i">{{ c }}</label>
          </fieldset>
          <div class="dbtns"><button class="ok">OK</button><button type="button">Annulla</button></div>
        </div>
      </form>
    </div>

    <footer class="taskbar">
      <button class="start" aria-label="Start"><Icon name="orb" :w="40" box="0 0 40 40" /></button>
      <i class="tgrip"></i>
      <div class="group">
        <button v-for="n in 2" :key="n" class="task"><Icon name="files" :w="32" box="0 0 32 32" />prove</button>
      </div>
      <button v-for="t in tasks" :key="t.icon" class="task" :class="t.kind" :aria-label="t.label ?? t.icon"><Icon :name="t.icon" :w="32" box="0 0 32 32" />{{ t.label }}</button>
      <div class="tray">
        <i class="tgrip"></i>
        <span class="lang">IT</span>
        <svg class="more-tray" width="9" height="6" viewBox="0 0 9 6"><path d="M0 5l4.500-5L9 5z" fill="#fff" /></svg>
        <Icon name="sound" :w="14" :h="15" /><Icon name="network" :w="15" :h="15" /><Icon name="flag" :w="16" :h="15" />
        <time>09:46<br>06/02/2013</time>
        <button class="desk" aria-label="Mostra desktop"></button>
      </div>
    </footer>
  </div>
</template>

<style>
body { margin: 0; background: #fff; }
</style>

<style scoped>
* { box-sizing: border-box; }
button, input, select { font: inherit; color: inherit; margin: 0; padding: 0; border: 0; background: none; border-radius: 0; appearance: none; outline: 0; }
i { display: block; flex: none; font-style: normal; }
svg { display: block; flex: none; }
.screen { position: relative; min-width: 1680px; font: 10px/12px "DejaVu Sans Condensed", "Noto Sans", sans-serif; color: #111; }

.menubar { display: flex; align-items: center; height: 33px; padding: 2px 9px 0 11px; background: linear-gradient(#6e6065 1px, #e6dcdc 2px, #d6d6d6 6px); border-bottom: 1px solid #eee; font-family: "Noto Sans", sans-serif; font-size: 11px; }
.logo { width: 41px; font-size: 18px; line-height: 20px; color: #aaa; text-shadow: 1px 1px #f4f4f4; }
.menus { display: flex; gap: 18px; padding-right: 15px; border-right: 1px solid #999; line-height: 18px; }
.menus a { color: #222; text-decoration: none; }
.appbar { display: flex; align-items: center; margin-left: 18px; color: #aaa; }
.chip { width: 17px; height: 15px; margin-right: 18px; border: 1px solid #aaa; background: #cacaca; font-size: 8px; line-height: 13px; font-weight: 700; text-align: center; }
.drop { display: flex; align-items: center; gap: 5px; margin-right: 18px; }
.zoomdrop { gap: 9px; color: #a8a8a8; }
.zoomdrop .tri { border-top-color: #999; }
.tri { width: 0; height: 0; border: 4px solid transparent; border-top: 5px solid #222; border-bottom: 0; }
.workspaces { display: flex; align-items: center; margin-left: auto; font-weight: 600; color: #999; padding-right: 14px; border-right: 1px solid #999; }
.bars { width: 4px; height: 20px; border: solid #aaa; border-width: 0 1px; margin-right: 5px; }
.ws { width: 68px; height: 23px; }
.ws.on { width: 73px; margin-right: 4px; background: #9d9d9d; border: 1px solid #868686; color: #eee; }
.more { margin-left: 3px; }
.cslive { display: flex; align-items: center; margin: 0 10px 0 13px; gap: 4px; }
.winbtns { display: flex; height: 18px; border: 1px solid #333; border-radius: 3px; background: linear-gradient(#eee, #bbb 50%, #aaa 51%, #ccc); box-shadow: inset 0 0 0 1px #eee; overflow: hidden; }
.winbtns button { width: 25px; display: flex; align-items: center; justify-content: center; border-right: 1px solid #444; }
.winbtns .close { width: 41px; border: 0; background: linear-gradient(#e4a49a, #cf5a49 45%, #b52c1a 50%, #d5604b); }

.frame { padding: 0 4px 4px; background: linear-gradient(#e2dedf, #d7d5d6); border-left: 1px solid #756a6e; padding-left: 3px; }
.inner { border: 1px solid #4b4b4b; }
.options { display: flex; align-items: center; height: 34px; padding-left: 4px; background: #d6d6d6; border-bottom: 1px solid #666; color: #222; }
.vgrip { width: 4px; height: 24px; margin-right: 10px; background: repeating-linear-gradient(#999 0 1px, transparent 1px 2px); }
.vsep { width: 1px; height: 27px; background: #999; margin: 0 6px 0 7px; }
.far { margin-left: auto; margin-right: calc(50% - 59px); }
.options .tri { margin: 0 0 0 4px; }
.tip { width: 26px; text-align: center; }
.tip i { width: 10px; height: 10px; border-radius: 5px; background: #000; margin: 0 auto 2px; }
.tip + .tri + svg { margin-left: 9px; }
.combo { position: relative; width: 150px; height: 18px; border: 2px solid #a9a9a9; background: #fff; }
.combo::before { content: ""; position: absolute; inset: 0 16px 0 0; border: 1px solid #bbb; }
.combo::after { content: ""; position: absolute; right: 4px; top: 6px; border: 4px solid transparent; border-top: 4px solid #999; border-bottom: 0; }
.combo select { position: relative; display: block; width: 100%; height: 14px; padding-left: 3px; color: #777; }
.combo.wide { width: 130px; margin: 0 10px 0 4px; border-width: 1px; height: 17px; }
.spin { display: flex; height: 18px; width: 54px; border: 2px solid #a8a8ac; background: #d0d0d0; color: #888; }
.spin input { flex: 1; min-width: 0; text-align: center; border-right: 1px solid #999; }
.spin button { width: 15px; background: #e3e6ee; border: 1px solid #fff; display: flex; justify-content: center; align-items: center; }
.spin button::after { content: ""; border: 3px solid transparent; border-left: 4px solid #3d4f8c; border-right: 0; }
.options .spin { margin: 0 7px 0 4px; }
.spin.flat button { background: #ddd; }
.spin.flat button::after { border-left-color: #777; }

.work { display: flex; align-items: stretch; }
.tools { width: 37px; flex: none; background: #656565; border-right: 1px solid #444; }
.toolhead { height: 12px; padding: 3px; background: linear-gradient(#555, #333); }
.grip { width: 24px; height: 3px; margin: 0 auto; background: repeating-linear-gradient(90deg, #999 0 1px, transparent 1px 2px); }
.tools > .grip { width: 36px; height: 11px; background: repeating-linear-gradient(90deg, #999 0 1px, transparent 1px 2px) 7px 3px / 22px 3px no-repeat #d6d6d6; }
.toolgroup { background: #d6d6d6; padding: 0 5px; border-top: 1px solid #d6d6d6; }
.toolgroup + .toolgroup { padding-top: 2px; border-top: 1px solid #d6d6d6; }
.toolgroup + .toolgroup::before { content: ""; display: block; height: 1px; background: #888; margin-left: -1px; }
.tool { position: relative; display: flex; width: 26px; height: 23px; align-items: center; justify-content: center; }
.tool.sel { border: 1px solid #555; border-radius: 3px; background: #c4c4c4; }
.fly { position: absolute; right: 1px; bottom: 1px; border: 2px solid #111; border-top-color: transparent; border-left-color: transparent; }
.colors { background: #d6d6d6; }

.doc { flex: 1; min-width: 0; }
.doctabs { height: 20px; background: linear-gradient(#999, #888); border-bottom: 1px solid #333; }
.doctab { display: inline-flex; align-items: center; justify-content: space-between; width: 194px; height: 19px; padding: 0 6px 0 9px; background: linear-gradient(#d8d8d8, #c8c8c8); border-right: 1px solid #666; font: 600 11px/18px "Noto Sans", sans-serif; color: #333; white-space: nowrap; }
.doctab button { width: 12px; height: 12px; flex: none; border: 1px solid #888; border-radius: 2px; display: flex; align-items: center; justify-content: center; }
.grid { display: grid; grid-template: 15px auto 15px / 15px minmax(0, 1fr) 16px; background: #fff; }
.origin { background: #fff; border: solid #000; border-width: 0 1px 1px 0; }
.hruler { border-bottom: 1px solid #000; overflow: hidden; }
.hruler text, .vruler text { font-size: 9px; }
.vscroll { grid-row: 1 / 3; grid-column: 3; }
.vruler { position: relative; border-right: 1px solid #000; overflow: hidden; }
.vruler svg { position: absolute; inset: 0; }
.canvas { background: #bfbfbf; padding: 72px 0; }
.paper { width: 740px; height: 773px; margin: 0 auto; background: #fff; box-shadow: 0 2px 3px 1px #888; }
.vscroll, .pscroll { display: flex; flex-direction: column; justify-content: space-between; align-items: center; background: linear-gradient(90deg, #f8f8f8, #ececec); padding: 7px 0; }
.up { border: 3px solid transparent; border-bottom: 4px solid #888; border-top: 0; }
.down { border: 3px solid transparent; border-top: 4px solid #888; border-bottom: 0; }
.left { border: 3px solid transparent; border-right: 4px solid #888; border-left: 0; }
.right { border: 3px solid transparent; border-left: 4px solid #888; border-right: 0; }
.status { grid-column: 1 / 4; display: flex; background: #d6d6d6; }
.status input { width: 47px; background: #fff; text-align: center; }
.vc { width: 23px; display: flex; align-items: center; justify-content: center; border-right: 1px solid #888; }
.docinfo { width: 171px; text-align: center; line-height: 15px; border-right: 1px solid #888; }
.go { width: 14px; display: flex; justify-content: center; align-items: center; border-right: 1px solid #888; }
.go i { border: 5px solid transparent; border-left: 6px solid #000; border-right: 0; }
.hscroll { flex: 1; display: flex; justify-content: space-between; align-items: center; padding: 0 6px; background: #eee; border-top: 1px solid #ddd; }
.sizer { width: 15px; }

.panel { position: absolute; border: 1px solid #333; border-radius: 4px 4px 0 0; background: #d6d6d6; }
.phead { display: flex; align-items: center; justify-content: flex-end; height: 12px; padding-right: 3px; border-bottom: 1px solid #222; border-radius: 3px 3px 0 0; background: linear-gradient(#666, #444); }
.dock .phead { height: 13px; }
.back { width: 8px; height: 6px; background: #ccc; clip-path: polygon(0 50%, 50% 0, 50% 50%, 100% 0, 100% 100%, 50% 50%, 50% 100%); }
.fwd { margin: 0 auto 0 26px; clip-path: polygon(100% 50%, 50% 0, 50% 50%, 0 0, 0 100%, 50% 50%, 50% 100%); }
.pbar { width: 1px; height: 7px; background: #888; margin: 0 4px; }
.x { width: 7px; height: 7px; background: linear-gradient(45deg, transparent 40%, #ccc 40% 60%, transparent 60%), linear-gradient(135deg, transparent 40%, #ccc 40% 60%, transparent 60%); }
.ptabs { display: flex; height: 17px; background: linear-gradient(#999, #888); border-bottom: 1px solid #666; font-size: 9px; font-weight: 700; color: #444; }
.ptabs button { padding: 0 7px; border-right: 1px solid #666; overflow: hidden; text-align: left; white-space: nowrap; }
.ptabs button.on { background: linear-gradient(#e4e4e4, #d6d6d6); height: 17px; }
.ptabs .cut { width: 35px; padding: 0 0 0 6px; }
.pmenu { width: 14px; height: 8px; margin: 4px 3px 0 auto; background: linear-gradient(#333, #333) 6px 0 / 8px 1px no-repeat, linear-gradient(#333, #333) 6px 2px / 8px 1px no-repeat, linear-gradient(#333, #333) 6px 4px / 8px 1px no-repeat, linear-gradient(#333, #333) 6px 6px / 8px 1px no-repeat, linear-gradient(#333, #333) 0 2px / 5px 1px no-repeat, linear-gradient(#333, #333) 1px 3px / 3px 1px no-repeat, linear-gradient(#333, #333) 2px 4px / 1px 1px no-repeat; }

.info { top: 137px; right: 427px; width: 216px; }
.pbody { padding: 2px 3px; height: 235px; display: flex; flex-direction: column; }
.readouts { display: grid; grid-template-columns: 1fr 1fr; height: 67px; border-bottom: 1px solid #888; }
.rgb { display: grid; grid-template: auto 1fr / 12px 67px; align-items: center; padding: 6px 0 0 4px; margin-bottom: 4px; }
.rgb + .rgb { border-left: 1px solid #888; padding-left: 2px; margin-left: -1px; }
.rgb table { border-collapse: collapse; width: 100%; line-height: 11px; }
.rgb th { font-weight: 400; padding: 0; width: 16px; text-align: right; white-space: nowrap; }
.rgb td { padding: 0 4px 0 0; text-align: right; }
.bit { grid-column: 1 / 3; align-self: end; padding-left: 8px; }
.low { height: 34px; padding-top: 3px; }
.low .rgb { grid-template-rows: 1fr; padding-top: 0; }
.low .rgb td { padding-right: 3px; }
.docsize { margin: 0; padding: 11px 9px 5px; border-bottom: 1px solid #888; }
.resize { margin-top: auto; align-self: flex-end; }

.dock { top: 47px; right: 23px; width: 252px; border-width: 1px 1px 0 0; background: none; }
.dockrow { display: flex; align-items: flex-start; }
.strip { width: 36px; background: #d6d6d6; border: 1px solid #333; border-top: 0; }
.strip, .stack { border-right: 0; }
.stripgroup { height: 74px; padding-top: 4px; border-bottom: 1px solid #555; }
.stripgroup:first-child { height: 42px; }
.stripgroup:last-child { border: 0; }
.stripgroup button { display: flex; width: 34px; height: 31px; align-items: center; justify-content: center; padding-top: 4px; }
.stack { flex: 1; min-width: 0; background: #d6d6d6; border-left: 1px solid #222; border-bottom: 1px solid #333; }
.swatchbox { display: flex; justify-content: space-between; padding: 1px 3px 0 2px; height: 97px; border-bottom: 1px solid #aaa; }
.swatches { display: grid; grid-template-columns: repeat(16, 12px); grid-auto-rows: 12px; align-content: start; }
.swatches i { border: solid #000; border-width: 0 1px 1px 0; }
.pscroll { width: 14px; flex: none; padding: 6px 0; }
.pfoot { display: flex; justify-content: flex-end; align-items: center; gap: 15px; height: 19px; padding-right: 1px; border-bottom: 2px solid #222; }
.pfoot svg:last-child { margin-left: -4px; }
h2 { margin: 0 2px; padding: 5px 4px; height: 29px; font-size: 10px; line-height: 14px; color: #000; border-bottom: 1px solid #999; }
.adjust { padding-top: 11px; }
.adjrow { display: flex; justify-content: center; align-items: flex-start; gap: 5px; height: 40px; background: linear-gradient(#888, #888) center 29px / 120px 1px no-repeat; }
.adjrow:last-child { height: 38px; background: none; }
.presetbox { display: flex; justify-content: space-between; margin: 0 13px 14px 12px; border-top: 1px solid #999; }
ul { list-style: none; margin: 0; padding: 0; width: 174px; border: 1px solid #000; border-bottom: 0; }
li { display: flex; align-items: center; height: 21px; padding-left: 4px; gap: 9px; border-bottom: 1px solid #000; white-space: nowrap; }
.adjfoot { display: flex; justify-content: space-between; height: 21px; margin: 0 2px; padding: 1px 4px 0 31px; border-top: 1px solid #999; }

.layers { top: 567px; right: 4px; width: 258px; }
.lrow { display: flex; align-items: center; height: 25px; margin: 0 5px 0 4px; gap: 4px; border-bottom: 1px solid #999; color: #999; }
.lrow .push { margin-left: auto; }
.lrow .spin { margin-left: auto; color: #666; }
.push + .spin { margin-left: 0 !important; }
.lrow svg + svg { margin-left: 2px; }
.lockl { width: 30px; }
.lbody { display: flex; height: 342px; margin: 0 2px; border-bottom: 1px solid #888; }
.lbody .pscroll { width: 16px; }
.llist { flex: 1; }
.layer { display: flex; height: 40px; border-bottom: 1px solid #888; }
.vis { width: 23px; display: flex; align-items: center; justify-content: center; border-right: 1px solid #999; }
.lmain { flex: 1; display: flex; align-items: center; gap: 9px; padding: 0 14px 0 3px; background: #3399ff; color: #fff; }
.lmain svg { margin-left: auto; }
.thumb { width: 31px; height: 32px; border: 1px solid #000; background: #fff; }
.lfoot { display: flex; align-items: center; justify-content: flex-end; gap: 13px; height: 21px; padding: 0 1px 4px 0; }
.lfoot svg:last-child { margin-left: -3px; }

.modal { position: absolute; top: 242px; left: 0; right: 0; display: flex; justify-content: center; pointer-events: none; }
.dialog { width: 434px; padding: 0 6px 6px; border: 1px solid #3b302c; border-radius: 7px; background: linear-gradient(transparent 92px, #d8b29c 94px), linear-gradient(100deg, #dfc2b1, #e5cbbb 30%, #cfa68f 60%, #e8d0c0 75%, #dbb8a3); box-shadow: inset 0 0 0 1px #f6e8e0; font-size: 12px; line-height: 14px; pointer-events: auto; }
.dtitle { display: flex; justify-content: space-between; height: 28px; font: 11px/28px "Noto Sans", sans-serif; color: #111; }
.dtitle span { padding-left: 1px; }
.dclose { width: 47px; height: 19px; display: flex; align-items: center; justify-content: center; border: 1px solid #63302a; border-top: 0; border-radius: 0 0 4px 4px; background: linear-gradient(#e5a79d, #cd5c4c 45%, #b3210f 50%, #d7634a); }
.dbody { padding: 14px 11px 14px 50px; border: 1px solid #6c5147; background: #ededed; box-shadow: 0 0 0 1px #ead2c4; }
.dbody p { margin: 0 0 15px; white-space: nowrap; }
dl { display: grid; grid-template-columns: 69px 1fr; gap: 10px 8px; margin: 0 0 16px; }
dt { text-align: right; }
dd { margin: 0; }
fieldset { margin: 0; padding: 4px 9px; border: 1px solid #8c9090; }
legend { margin-left: 6px; padding: 0 4px; }
fieldset label { display: flex; align-items: center; height: 20px; gap: 4px; }
fieldset input { width: 12px; height: 12px; border: 1px solid #888; border-radius: 6px; background: radial-gradient(#ddd, #fff); flex: none; }
fieldset input:checked { background: radial-gradient(circle at 50% 50%, #5fb0d0 0 1px, #14415f 2px 3px, #eee 4px); }
.dbtns { display: flex; justify-content: flex-end; gap: 17px; margin-top: 21px; }
.dbtns button { width: 91px; height: 18px; border: 1px solid #707070; border-radius: 3px; background: linear-gradient(#f4f4f4, #e4e4e4 50%, #cecece 51%, #d4d4d4); box-shadow: inset 0 0 0 1px #fafafa; }
.dbtns .ok { border-color: #2c7ba5; background: linear-gradient(#eaf7fd, #d0edfa 50%, #b0dff4 51%, #c2e8f8); box-shadow: inset 0 0 0 1px #3fc8f3; }

.taskbar { display: flex; align-items: center; height: 40px; padding-left: 7px; overflow: hidden; background: linear-gradient(#35282a 1px, #a58c88 1px 2px, transparent 2px), linear-gradient(90deg, #694e4c, #6d5350 45%, #7d5f59 64%, #8e624c 68%, #8f5b38); font-family: "Noto Sans", sans-serif; font-size: 11px; color: #fff; }
.start { width: 40px; margin-right: 11px; }
.tgrip { width: 9px; height: 32px; margin-right: 8px; background: radial-gradient(circle, #2f2220 1px, transparent 1px) 0 0 / 3px 4px; }
.group { display: flex; margin: 0 2px 0 1px; }
.task { display: flex; align-items: center; width: 158px; height: 38px; padding-left: 7px; gap: 5px; margin: 0 2px; border: 1px solid #d2c3c0; border-radius: 3px; white-space: nowrap; background: linear-gradient(172deg, #ffffff88, #ffffff33 45%, #ffffff18 46%, #ffffff22); box-shadow: 0 0 0 1px #3a2c2c; text-shadow: 0 1px 2px #333; }
.group .task { width: 159px; margin: 0; }
.group .task + .task { border-left-color: #8a7572; }
.task.pin { width: 62px; margin: 0; padding: 0; justify-content: center; border: 0; background: none; box-shadow: none; gap: 0; }
.task.active { background: linear-gradient(172deg, #ffffffbb, #ffffff66 45%, #ffffff44 46%, #ffffff66); }
.tray { display: flex; align-items: center; gap: 8px; margin-left: auto; height: 40px; }
.tray .tgrip { margin: 0; }
.lang { width: 20px; margin-left: 3px; }
.more-tray { margin-right: 5px; }
time { width: 80px; text-align: center; line-height: 17px; }
.desk { width: 14px; height: 38px; margin-left: -8px; border: 1px solid #cfa98f; background: linear-gradient(135deg, #c4977b, #7b4a30); }
</style>
